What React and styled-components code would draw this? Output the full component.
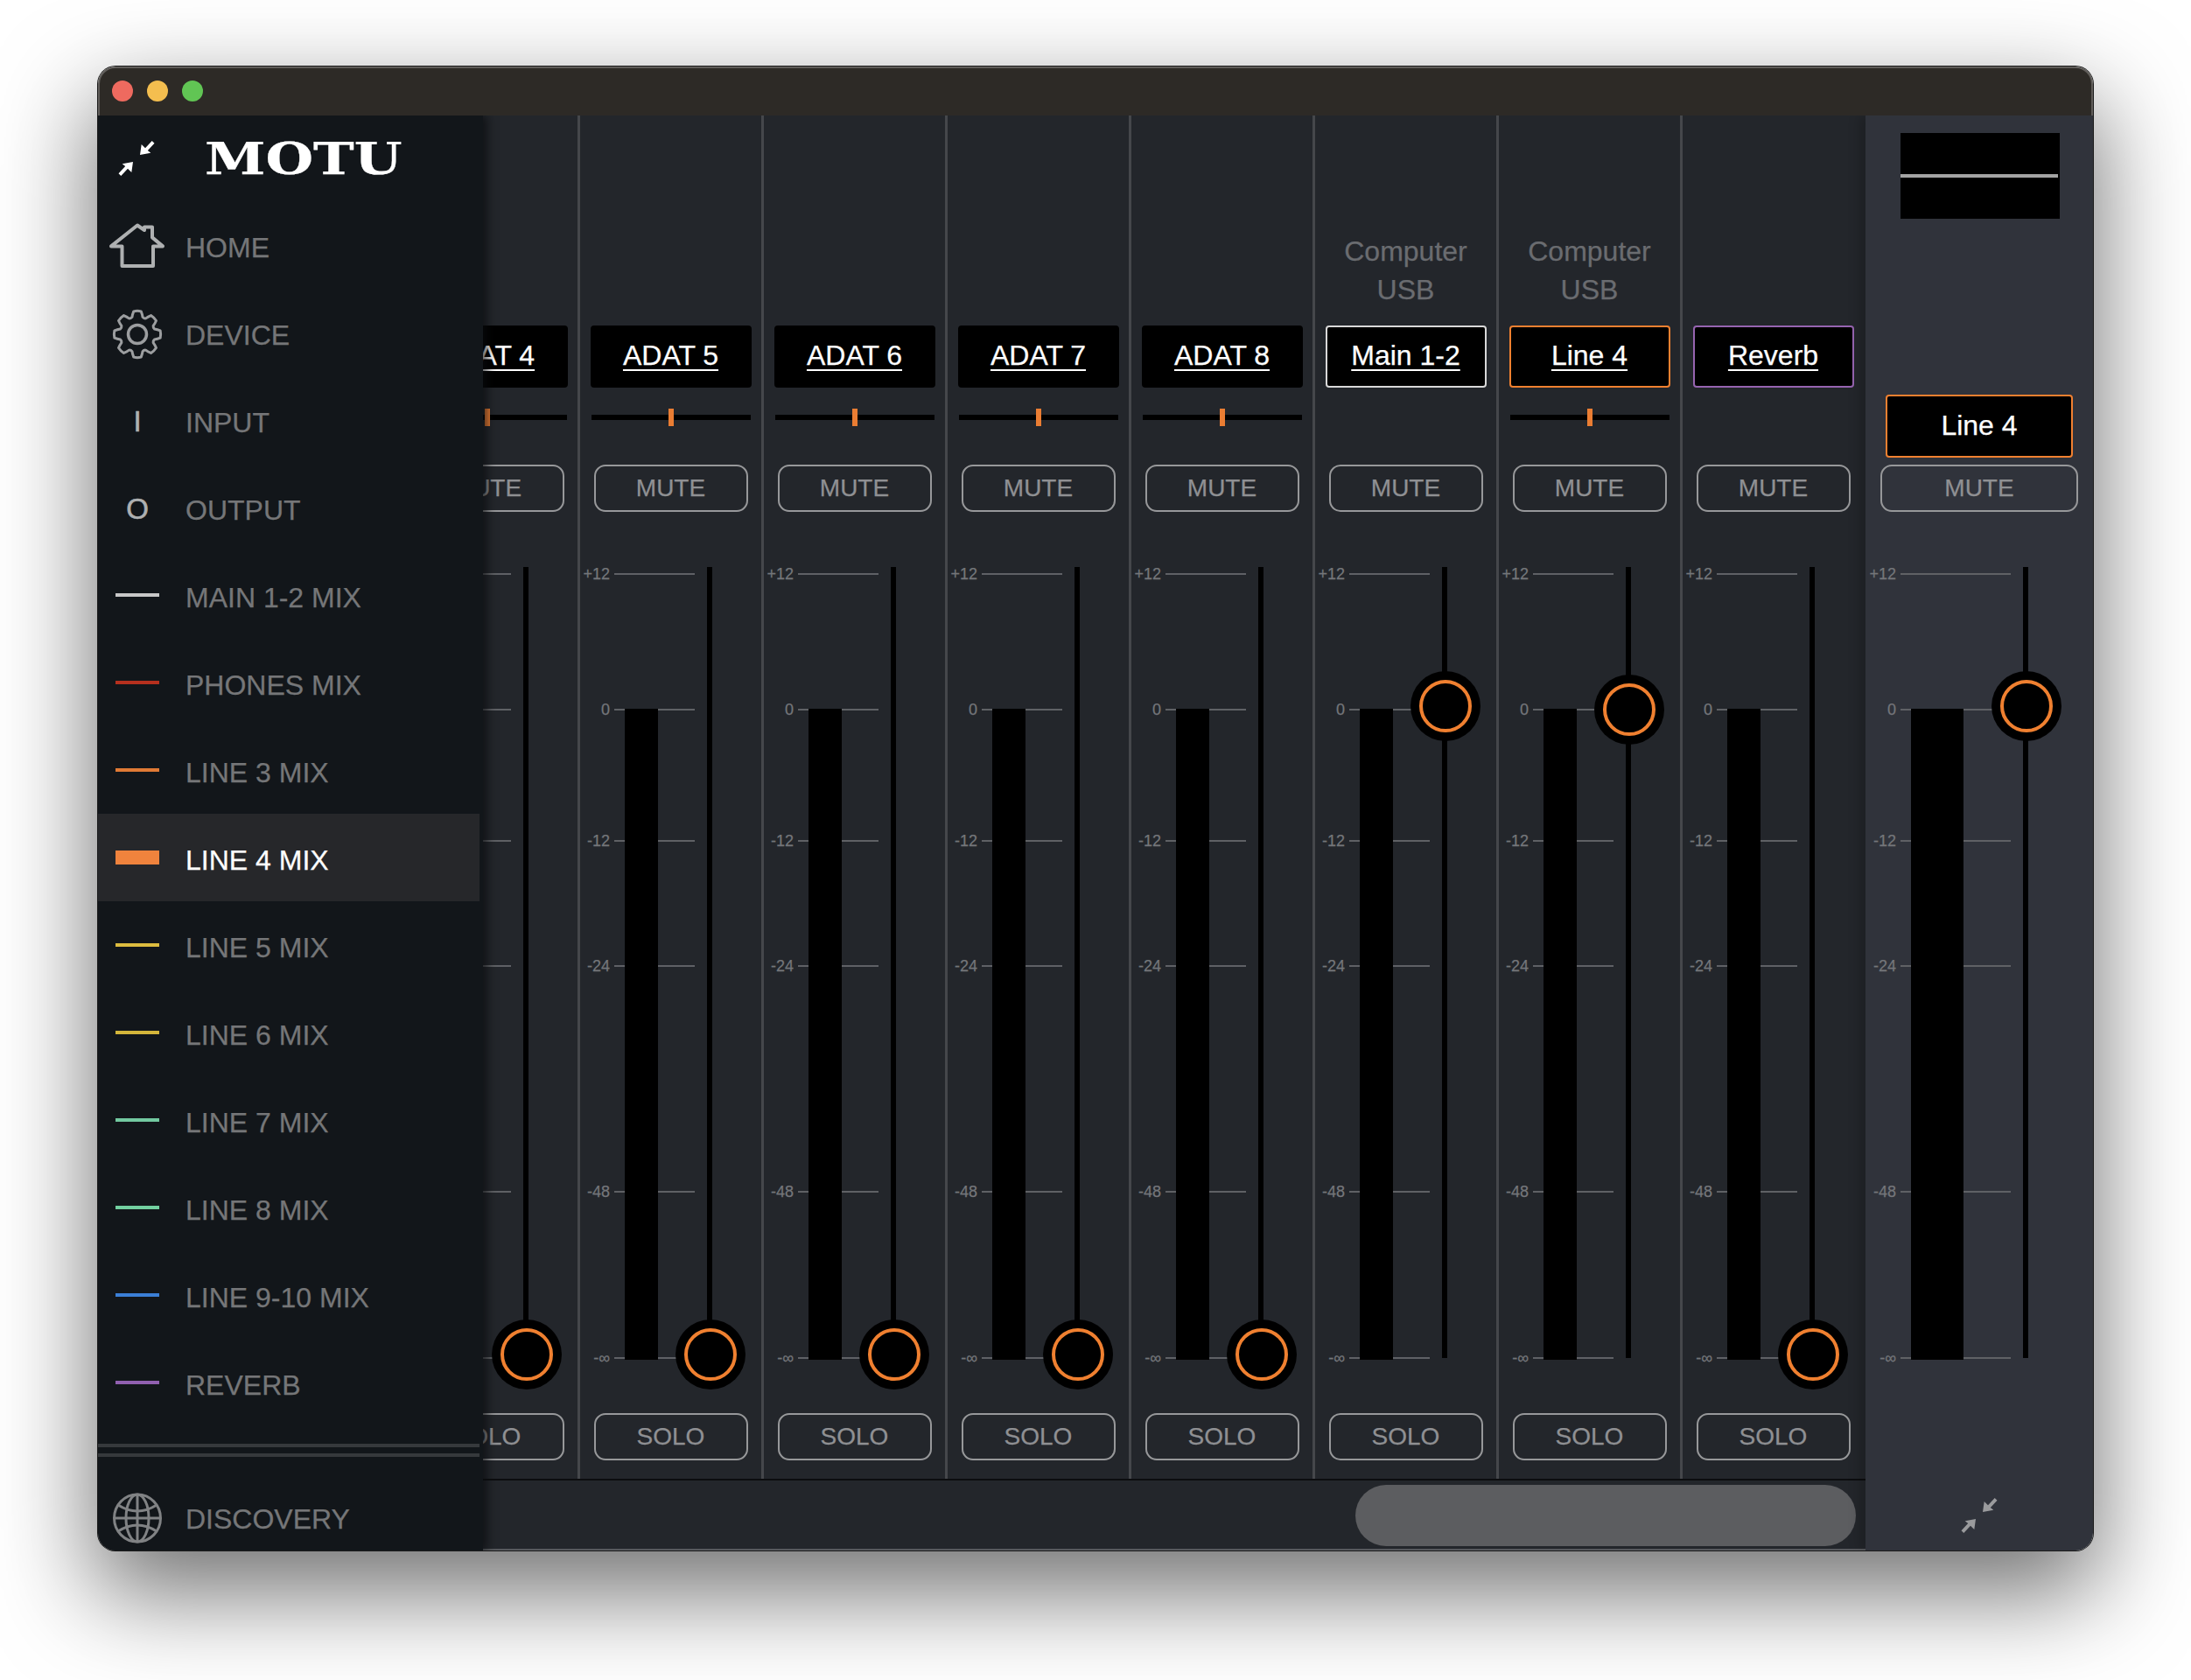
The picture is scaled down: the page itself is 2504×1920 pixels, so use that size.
import React from "react";
import styled, { createGlobalStyle } from "styled-components";

const Global = createGlobalStyle`
  html, body { margin: 0; padding: 0; background: #fff; }
  #root { height: 1920px; overflow: hidden; }
  *, *::before, *::after { box-sizing: border-box; }
`;

const Page = styled.div`
  padding: 76px 0 0 112px;
  height: 1920px;
  font-family: "Liberation Sans", Arial, sans-serif;
  -webkit-text-stroke: 0.25px currentColor;
`;

const Window = styled.div`
  position: relative;
  width: 2280px;
  height: 1696px;
  border-radius: 20px;
  display: flex;
  flex-direction: column;
  box-shadow: 0 0 0 1px #1c1c1c, 0 44px 110px 6px rgba(0, 0, 0, 0.55);
  &::after {
    content: "";
    position: absolute;
    inset: 0;
    border-radius: 20px;
    border: 2px solid rgba(255, 255, 255, 0.24);
    pointer-events: none;
  }
`;

const TitleBar = styled.div`
  height: 56px;
  flex: none;
  background: #2d2a26;
  border-radius: 20px 20px 0 0;
  display: flex;
  align-items: center;
  gap: 16px;
  padding-left: 16px;
`;

const Light = styled.span`
  width: 24px;
  height: 24px;
  border-radius: 50%;
  background: ${(p) => p.$c};
`;

const Body = styled.div`
  position: relative;
  flex: 1;
  display: flex;
  min-height: 0;
  overflow: hidden;
  border-radius: 0 0 20px 20px;
`;

const Sidebar = styled.nav`
  position: absolute;
  left: 0;
  top: 0;
  bottom: 0;
  width: 440px;
  z-index: 3;
  background: #12161a;
  box-shadow: 5px 0 10px rgba(10, 12, 14, 0.7);
  display: flex;
  flex-direction: column;
`;

const Brand = styled.div`
  height: 98px;
  flex: none;
  display: flex;
  align-items: center;
  padding-left: 22px;
`;

const Logo = styled.span`
  font-family: "DejaVu Serif", "Liberation Serif", serif;
  font-weight: 700;
  font-size: 51px;
  line-height: 1;
  color: #fff;
  margin-left: 56px;
  display: inline-block;
  transform: scaleX(1.23);
  transform-origin: left center;
`;

const NavRow = styled.div`
  height: 100px;
  flex: none;
  width: 436px;
  display: flex;
  align-items: center;
  background: ${(p) => (p.$active ? "#26272a" : "transparent")};
`;

const NavIcon = styled.div`
  width: 90px;
  margin-right: 10px;
  padding-top: ${(p) => (p.$glyph ? 4 : 0)}px;
  flex: none;
  display: flex;
  justify-content: center;
  align-items: center;
  color: #aeb0b1;
  font-size: 33px;
  -webkit-text-stroke: 0.6px currentColor;
`;

const Swatch = styled.span`
  width: 50px;
  height: ${(p) => (p.$active ? 16 : 4)}px;
  background: ${(p) => p.$c};
`;

const NavLabel = styled.span`
  font-size: 32px;
  color: ${(p) => (p.$active ? "#fff" : "#757678")};
  padding-top: 6px;
`;

const SideRule = styled.div`
  width: 436px;
  height: 4px;
  flex: none;
  background: #36393c;
  margin-top: ${(p) => p.$mt}px;
`;

const Discovery = styled(NavRow)`
  height: 78px;
  margin-top: 29px;
`;

const Mixer = styled.div`
  flex: 1;
  min-width: 0;
  display: flex;
  flex-direction: column;
  background: #23262b;
`;

const Strips = styled.div`
  flex: 1;
  min-height: 0;
  display: flex;
  justify-content: flex-end;
  padding-right: 2px;
  overflow: hidden;
`;

const Channel = styled.section`
  width: 210px;
  flex: none;
  border-left: 3px solid #45474b;
  display: flex;
  flex-direction: column;
  align-items: center;
`;

const Source = styled.div`
  height: 240px;
  flex: none;
  display: flex;
  flex-direction: column;
  justify-content: flex-end;
  padding-bottom: 19px;
  text-align: center;
  font-size: 32px;
  line-height: 44px;
  color: #6a6c70;
`;

const NameBox = styled.div`
  width: ${(p) => p.$w || 184}px;
  height: ${(p) => p.$h || 71}px;
  flex: none;
  background: #000;
  border: 2px solid ${(p) => p.$c || "#000"};
  border-radius: 4px;
  color: #fff;
  font-size: 32px;
  padding-bottom: 2px;
  display: flex;
  align-items: center;
  justify-content: center;
  text-decoration: ${(p) => (p.$plain ? "none" : "underline")};
  text-underline-offset: 5px;
  text-decoration-thickness: 2px;
`;

const PanSlot = styled.div`
  height: 88px;
  flex: none;
  align-self: stretch;
  padding-top: 31px;
  display: flex;
  justify-content: center;
`;

const PanTrack = styled.div`
  position: relative;
  width: 182px;
  height: 6px;
  background: #000;
`;

const PanHandle = styled.span`
  position: absolute;
  left: 88px;
  top: -7px;
  width: 6px;
  height: 20px;
  background: #ea7d33;
`;

const PillButton = styled.div`
  width: ${(p) => p.$w || 176}px;
  height: 54px;
  flex: none;
  border: 2px solid #97989a;
  border-radius: 13px;
  color: #8f9093;
  font-size: 28px;
  display: flex;
  align-items: center;
  justify-content: center;
`;

const FaderArea = styled.div`
  position: relative;
  align-self: stretch;
  height: 1030px;
  flex: none;
`;

const Tick = styled.div`
  position: absolute;
  left: ${(p) => p.$left}px;
  width: ${(p) => p.$w}px;
  height: 2px;
  background: #5f6165;
`;

const TickLabel = styled.span`
  position: absolute;
  right: 100%;
  top: -10px;
  margin-right: 5px;
  font-size: 18px;
  line-height: 22px;
  color: #74767a;
  white-space: nowrap;
`;

const Meter = styled.div`
  position: absolute;
  left: ${(p) => p.$left}px;
  width: ${(p) => p.$w}px;
  top: 225px;
  height: 744px;
  background: #000;
`;

const Track = styled.div`
  position: absolute;
  left: ${(p) => p.$left}px;
  top: 63px;
  width: 6px;
  height: 904px;
  background: #000;
`;

const Knob = styled.div`
  position: absolute;
  left: ${(p) => p.$left - 40}px;
  width: 80px;
  height: 80px;
  border-radius: 50%;
  background: #000;
  display: flex;
  align-items: center;
  justify-content: center;
  &::after {
    content: "";
    width: 60px;
    height: 60px;
    border-radius: 50%;
    border: 4px solid #f08030;
  }
`;

const RightPanel = styled.aside`
  width: 260px;
  flex: none;
  background: #30333b;
  z-index: 2;
  box-shadow: -7px 0 12px rgba(0, 0, 0, 0.18);
  display: flex;
  flex-direction: column;
  align-items: center;
`;

const Scope = styled.div`
  width: 182px;
  height: 98px;
  margin: 20px 0 0 2px;
  flex: none;
  background: #000;
  display: flex;
  align-items: center;
`;

const ScopeLine = styled.span`
  width: 180px;
  height: 4px;
  background: #a3a3a3;
`;

const PanelName = styled(NameBox)`
  margin-top: 201px;
  margin-bottom: 8px;
`;

const ScrollRow = styled.div`
  height: 82px;
  flex: none;
  border-top: 2px solid #0c0d0f;
  display: flex;
  justify-content: flex-end;
  align-items: flex-end;
  padding: 0 11px 5px 0;
`;

const Thumb = styled.div`
  width: 572px;
  height: 70px;
  border-radius: 35px;
  background: #5c5d60;
`;

const PanelFoot = styled.div`
  flex: 1;
  display: flex;
  align-items: flex-end;
  justify-content: center;
  padding-bottom: 18px;
`;

function Compress({ size = 44, color = "#fff" }) {
  return (
    <svg width={size} height={size} viewBox="0 0 44 44" fill={color} aria-hidden="true">
      <path d="M26 18 L27.7 6 L32 10.2 L39.7 2 L42.5 4.8 L34.8 13 L38.3 15.7 Z" />
      <path d="M18 26 L16.3 38 L12 33.8 L4.3 42 L1.5 39.2 L9.2 31 L5.7 28.3 Z" />
    </svg>
  );
}

function HomeIcon() {
  return (
    <svg width="64" height="54" viewBox="0 0 64 54" fill="none" stroke="#aeb0b1" strokeWidth="4" strokeLinejoin="round" aria-hidden="true">
      <path d="M2 26.4 L32 2.5 L40 8 L40 4.5 L49 4.5 L49 16.4 L61 26.4 L50 26.4 L50 49 L14.5 49 L14.5 26.4 Z" />
    </svg>
  );
}

function gearPath() {
  const cx = 29;
  const cy = 29;
  const rOut = 26.5;
  const rIn = 20.5;
  const pt = (r, a) => `${(cx + r * Math.sin(a)).toFixed(2)} ${(cy - r * Math.cos(a)).toFixed(2)}`;
  let d = "";
  for (let i = 0; i < 8; i++) {
    const a = (i * Math.PI) / 4;
    d += `${i === 0 ? "M" : "L"}${pt(rIn, a - 0.3)} Q${pt(rIn + 3, a - 0.24)} ${pt(rOut, a - 0.16)} Q${pt(rOut + 0.6, a)} ${pt(rOut, a + 0.16)} Q${pt(rIn + 3, a + 0.24)} ${pt(rIn, a + 0.3)} `;
    d += `Q${pt(rIn - 1.2, a + Math.PI / 8)} ${pt(rIn, a + Math.PI / 4 - 0.3)} `;
  }
  return d + "Z";
}

function GearIcon() {
  return (
    <svg width="58" height="58" viewBox="0 0 58 58" fill="none" stroke="#9c9ea0" strokeLinejoin="round" aria-hidden="true">
      <path d={gearPath()} strokeWidth="3" />
      <circle cx="29" cy="29" r="10.5" strokeWidth="3.5" />
    </svg>
  );
}

function GlobeIcon() {
  return (
    <svg width="58" height="58" viewBox="0 0 58 58" fill="none" stroke="#808284" strokeWidth="3" aria-hidden="true">
      <ellipse cx="29" cy="29" rx="26.5" ry="27" />
      <ellipse cx="29" cy="29" rx="13" ry="27" />
      <path d="M29 2 V56 M2.5 29 H55.5" />
      <path d="M7 14 Q29 28 51 14 M7 44 Q29 30 51 44" />
    </svg>
  );
}

const ticks = [
  { y: 70, l: "+12" },
  { y: 225, l: "0" },
  { y: 375, l: "-12" },
  { y: 518, l: "-24" },
  { y: 776, l: "-48" },
  { y: 966, l: "-∞" },
];

function Fader({ tickLeft, tickW, meterLeft, meterW, trackLeft, knobLeft, knobY }) {
  return (
    <FaderArea>
      {ticks.map((t) => (
        <Tick key={t.l} $left={tickLeft} $w={tickW} style={{ top: t.y }}>
          <TickLabel>{t.l}</TickLabel>
        </Tick>
      ))}
      <Meter $left={meterLeft} $w={meterW} />
      <Track $left={trackLeft} />
      {knobY != null && <Knob $left={knobLeft} style={{ top: knobY - 40 }} />}
    </FaderArea>
  );
}

const BOTTOM = 963;
const channels = [
  { name: "ADAT 4", pan: true, knob: BOTTOM },
  { name: "ADAT 5", pan: true, knob: BOTTOM },
  { name: "ADAT 6", pan: true, knob: BOTTOM },
  { name: "ADAT 7", pan: true, knob: BOTTOM },
  { name: "ADAT 8", pan: true, knob: BOTTOM },
  { name: "Main 1-2", src: true, c: "#d8d8d8", knob: 222 },
  { name: "Line 4", src: true, c: "#f08030", pan: true, knob: 226 },
  { name: "Reverb", c: "#9664b0", knob: BOTTOM },
];

const navTop = [
  { label: "HOME", icon: <HomeIcon /> },
  { label: "DEVICE", icon: <GearIcon /> },
  { label: "INPUT", icon: "I" },
  { label: "OUTPUT", icon: "O" },
];

const mixes = [
  ["MAIN 1-2 MIX", "#c8c8c8"],
  ["PHONES MIX", "#b5301e"],
  ["LINE 3 MIX", "#e07a35"],
  ["LINE 4 MIX", "#f0833d", true],
  ["LINE 5 MIX", "#dcbc3f"],
  ["LINE 6 MIX", "#d4b53a"],
  ["LINE 7 MIX", "#72c9a0"],
  ["LINE 8 MIX", "#72d0a0"],
  ["LINE 9-10 MIX", "#3b7fd6"],
  ["REVERB", "#9060b0"],
];

export default function App() {
  return (
    <Page>
      <Global />
      <Window>
        <TitleBar>
          <Light $c="#ee6a5f" />
          <Light $c="#f4be4f" />
          <Light $c="#61c554" />
        </TitleBar>
        <Body>
          <Sidebar>
            <Brand>
              <Compress />
              <Logo>MOTU</Logo>
            </Brand>
            {navTop.map((n) => (
              <NavRow key={n.label}>
                <NavIcon $glyph>{n.icon}</NavIcon>
                <NavLabel>{n.label}</NavLabel>
              </NavRow>
            ))}
            {mixes.map(([label, c, active]) => (
              <NavRow key={label} $active={active}>
                <NavIcon>
                  <Swatch $c={c} $active={active} />
                </NavIcon>
                <NavLabel $active={active}>{label}</NavLabel>
              </NavRow>
            ))}
            <SideRule $mt={20} />
            <SideRule $mt={7} />
            <Discovery>
              <NavIcon $glyph>
                <GlobeIcon />
              </NavIcon>
              <NavLabel>DISCOVERY</NavLabel>
            </Discovery>
          </Sidebar>
          <Mixer>
            <Strips>
              {channels.map((ch) => (
                <Channel key={ch.name}>
                  <Source>
                    {ch.src && (
                      <>
                        Computer
                        <br />
                        USB
                      </>
                    )}
                  </Source>
                  <NameBox $c={ch.c}>{ch.name}</NameBox>
                  <PanSlot>
                    {ch.pan && (
                      <PanTrack>
                        <PanHandle />
                      </PanTrack>
                    )}
                  </PanSlot>
                  <PillButton>MUTE</PillButton>
                  <Fader tickLeft={39} tickW={92} meterLeft={51} meterW={38} trackLeft={145} knobLeft={149} knobY={ch.knob} />
                  <PillButton>SOLO</PillButton>
                </Channel>
              ))}
            </Strips>
            <ScrollRow>
              <Thumb />
            </ScrollRow>
          </Mixer>
          <RightPanel>
            <Scope>
              <ScopeLine />
            </Scope>
            <PanelName $w={214} $h={72} $c="#f08030" $plain>
              Line 4
            </PanelName>
            <PillButton $w={226}>MUTE</PillButton>
            <Fader tickLeft={40} tickW={126} meterLeft={52} meterW={60} trackLeft={180} knobLeft={184} knobY={222} />
            <PanelFoot>
              <Compress color="#9a9b9d" />
            </PanelFoot>
          </RightPanel>
        </Body>
      </Window>
    </Page>
  );
}
